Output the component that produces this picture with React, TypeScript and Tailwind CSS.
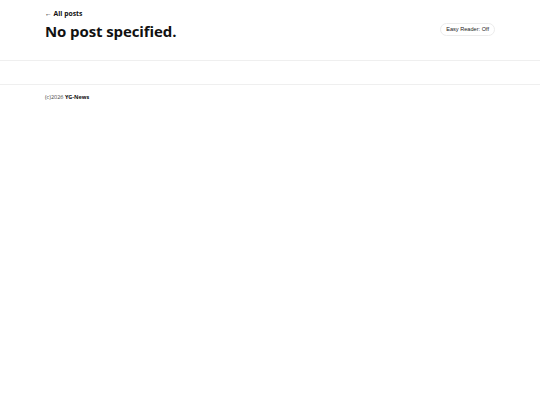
export default function App() {
  return (
    <div className="min-h-[405px] bg-white text-[#111] font-['Open_Sans',sans-serif]">
      <header className="px-[45px] pt-[9px] pb-[19px] flex items-end justify-between">
        <div>
          <a href="#" className="block text-[6.8px] font-bold leading-[10px] text-[#111]">
            ← All posts
          </a>
          <h1 className="mt-[2px] text-[15px] font-bold leading-[20px] tracking-[-0.1px]">No post specified.</h1>
        </div>
        <button className="mb-[5px] h-[13px] flex items-center rounded-full border border-[#ececec] px-[5px] text-[5.6px] leading-[7px] text-[#222] font-['Liberation_Sans',Arial,sans-serif]">
          Easy Reader: Off
        </button>
      </header>
      <div className="border-t border-[#efefef] h-[24px]" />
      <footer className="border-t border-[#efefef] px-[45px] pt-[8px] text-[5.5px] leading-[8px] text-[#444]">
        (c)2026 <span className="font-bold text-[#111]">YG-News</span>
      </footer>
    </div>
  );
}
